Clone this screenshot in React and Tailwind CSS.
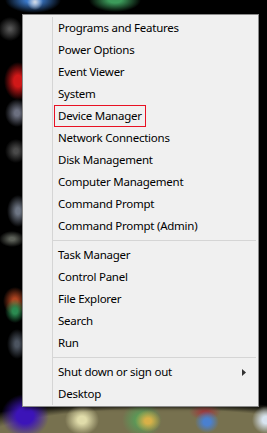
const groups = [
  [
    "Programs and Features",
    "Power Options",
    "Event Viewer",
    "System",
    "Device Manager",
    "Network Connections",
    "Disk Management",
    "Computer Management",
    "Command Prompt",
    "Command Prompt (Admin)",
  ],
  ["Task Manager", "Control Panel", "File Explorer", "Search", "Run"],
  ["Shut down or sign out", "Desktop"],
];

function Row({ label }) {
  const boxed = label === "Device Manager";
  const sub = label === "Shut down or sign out";
  return (
    <div className="h-[22px] flex items-center pl-[1px] pr-[10px]">
      <span
        className={`h-[22px] flex items-center px-[3px] border ${
          boxed ? "border-[#e81123]" : "border-transparent"
        }`}
      >
        {label}
      </span>
      {sub && (
        <svg width="4" height="7" viewBox="0 0 4 7" className="ml-auto">
          <path d="M0 0 L4 3.5 L0 7 Z" fill="#333" />
        </svg>
      )}
    </div>
  );
}

export default function App() {
  return (
    // blurred desktop wallpaper/taskbar behind the menu, as layered gradients
    <div className="w-[267px] h-[433px] overflow-hidden pt-[14px] pl-[22px] bg-black bg-[image:radial-gradient(8px_8px_at_35px_2px,#c8d4e4_10%,transparent),radial-gradient(28px_13px_at_33px_0px,#3a78c8_25%,transparent),radial-gradient(26px_12px_at_115px_0px,#3c9a5a_25%,transparent),radial-gradient(12px_12px_at_10px_29px,#555_10%,transparent),radial-gradient(14px_19px_at_18px_81px,#d01818_30%,transparent),radial-gradient(12px_14px_at_17px_113px,#6c7080_20%,transparent),radial-gradient(11px_12px_at_16px_151px,#4a4a4a_20%,transparent),radial-gradient(11px_16px_at_18px_211px,#6e7684_20%,transparent),radial-gradient(13px_8px_at_12px_239px,#5c6058_20%,transparent),radial-gradient(10px_12px_at_15px_311px,#2a8a50_25%,transparent),radial-gradient(12px_14px_at_15px_301px,#b04420_20%,transparent),radial-gradient(10px_15px_at_17px_344px,#4c5460_20%,transparent),radial-gradient(24px_22px_at_25px_416px,#3c14b8_35%,transparent),radial-gradient(17px_15px_at_82px_420px,#e0dcaa_25%,transparent),radial-gradient(13px_11px_at_148px_421px,#d8b048_25%,transparent),radial-gradient(20px_18px_at_142px_420px,#5a9a58_30%,transparent),radial-gradient(12px_11px_at_207px_422px,#4a80d0_30%,transparent),radial-gradient(16px_8px_at_205px_412px,#9a4040_20%,transparent),radial-gradient(14px_14px_at_266px_420px,#d8e4f0_25%,transparent),radial-gradient(230px_42px_at_160px_442px,#77714f_78%,transparent)]">
      <div className="w-[237px] h-[393px] bg-[#f0f0f0] border border-[#8a8a8a] shadow-[2px_2px_3px_rgba(0,0,0,0.4)]">
        <div
          className="ml-[29px] mt-[2px] mr-[2px] border-l border-[#d5d5d5] text-[11.5px] tracking-[-0.25px] leading-none text-black"
          style={{ fontFamily: '"Noto Sans", "Open Sans", sans-serif' }}
        >
          {groups.map((items, gi) => (
            <div key={gi}>
              {gi > 0 && (
                <div className="h-[7px] flex flex-col justify-center">
                  <div className="h-[1px] bg-[#d5d5d5]" />
                </div>
              )}
              {items.map((label) => (
                <Row key={label} label={label} />
              ))}
            </div>
          ))}
        </div>
      </div>
    </div>
  );
}
